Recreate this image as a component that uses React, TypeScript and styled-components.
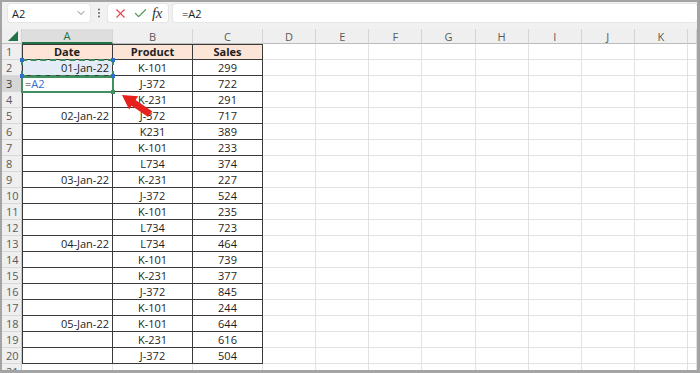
import React from 'react'
import styled, { createGlobalStyle, css } from 'styled-components'
import { X, Check, ChevronDown } from 'lucide-react'

const GlobalStyle = createGlobalStyle`
  html, body {
    margin: 0;
    padding: 0;
    background: #ffffff;
  }
  * {
    box-sizing: border-box;
  }
`

const GREEN = '#217346'
const TABLE_LINE = '#3a3a3a'
const GRID_LINE = '#e2e2e2'

const ROWS: [string, string, string][] = [
  ['Date', 'Product', 'Sales'],
  ['01-Jan-22', 'K-101', '299'],
  ['=A2', 'J-372', '722'],
  ['', 'K-231', '291'],
  ['02-Jan-22', 'J-372', '717'],
  ['', 'K231', '389'],
  ['', 'K-101', '233'],
  ['', 'L734', '374'],
  ['03-Jan-22', 'K-231', '227'],
  ['', 'J-372', '524'],
  ['', 'K-101', '235'],
  ['', 'L734', '723'],
  ['04-Jan-22', 'L734', '464'],
  ['', 'K-101', '739'],
  ['', 'K-231', '377'],
  ['', 'J-372', '845'],
  ['', 'K-101', '244'],
  ['05-Jan-22', 'K-101', '644'],
  ['', 'K-231', '616'],
  ['', 'J-372', '504'],
]

const COLUMNS = ['A', 'B', 'C', 'D', 'E', 'F', 'G', 'H', 'I', 'J', 'K', '']

const Frame = styled.div`
  width: 700px;
  height: 373px;
  display: flex;
  flex-direction: column;
  border-top: 2px solid #a4a4a4;
  border-left: 2px solid #a4a4a4;
  border-right: 3px solid #a4a4a4;
  border-bottom: 3px solid #a4a4a4;
  background: #f1f1f1;
  font-family: 'Open Sans', 'Noto Sans', sans-serif;
  overflow: hidden;
`

const FormulaBar = styled.div`
  height: 27px;
  flex: none;
  display: flex;
  align-items: flex-start;
  gap: 5px;
  padding: 2px 0 0 6px;
  background: #f1f1f1;
`

const Field = styled.div<{ $width?: number }>`
  height: 18px;
  ${({ $width }) => ($width ? css`width: ${$width}px;` : css`flex: 1;`)}
  display: flex;
  align-items: center;
  background: #ffffff;
  border-radius: 3px;
  box-shadow: 0 0 0 1px #e6e6e6;
  font-size: 11px;
  color: #222;
`

const NameText = styled.span`
  flex: 1;
  padding-left: 4px;
`

const Chevron = styled(ChevronDown)`
  margin-right: 3px;
  color: #555;
`

const Dots = styled.svg`
  width: 6px;
  height: 18px;
  margin: 0 1px;
`

const Buttons = styled(Field)`
  justify-content: space-around;
  padding: 0 4px 0 3px;
`

const CancelIcon = styled(X)`
  color: #e0474c;
`

const EnterIcon = styled(Check)`
  color: #4f9a56;
`

const Fx = styled.span`
  font-family: 'Liberation Serif', 'DejaVu Serif', serif;
  font-style: italic;
  font-size: 15px;
  color: #333;
  letter-spacing: -0.5px;
`

const FormulaText = styled.span`
  padding-left: 9px;
`

const Sheet = styled.div`
  position: relative;
  flex: 1;
  display: grid;
  grid-template-columns: 20px 91px 80px 70px repeat(8, 53.125px) 1fr;
  grid-template-rows: 15px;
  grid-auto-rows: 16px;
  overflow: hidden;
  background: #ffffff;
  font-size: 11px;
  color: #1e1e1e;
`

const Corner = styled.div`
  position: relative;
  background: #efefef;
  border-right: 1px solid #d4d4d4;
  border-bottom: 1px solid #bcbcbc;
`

const CornerTriangle = styled.svg`
  position: absolute;
  right: 3px;
  bottom: 2px;
`

const ColHeader = styled.div<{ $active?: boolean }>`
  display: flex;
  align-items: center;
  justify-content: center;
  background: ${({ $active }) => ($active ? '#dedede' : '#efefef')};
  color: ${({ $active }) => ($active ? GREEN : '#5a5a5a')};
  border-right: 1px solid #d4d4d4;
  border-bottom: ${({ $active }) => ($active ? `2px solid ${GREEN}` : '1px solid #bcbcbc')};
  font-size: 11px;
`

const RowHeader = styled.div<{ $active?: boolean }>`
  display: flex;
  align-items: center;
  padding-left: 4px;
  background: ${({ $active }) => ($active ? '#d6d6d6' : '#efefef')};
  color: ${({ $active }) => ($active ? '#3a3a3a' : '#5a5a5a')};
  border-right: 1px solid #c8c8c8;
  border-bottom: 1px solid #d8d8d8;
  font-size: 11px;
`

type Align = 'left' | 'center' | 'right'

const Cell = styled.div<{
  $table?: boolean
  $align?: Align
  $bold?: boolean
  $fill?: string
  $first?: boolean
  $top?: boolean
}>`
  position: relative;
  display: flex;
  align-items: center;
  padding: 0 3px;
  white-space: nowrap;
  justify-content: ${({ $align }) =>
    $align === 'right' ? 'flex-end' : $align === 'center' ? 'center' : 'flex-start'};
  font-weight: ${({ $bold }) => ($bold ? 700 : 400)};
  background: ${({ $fill }) => $fill || '#ffffff'};
  border-right: 1px solid ${({ $table }) => ($table ? TABLE_LINE : GRID_LINE)};
  border-bottom: 1px solid ${({ $table }) => ($table ? TABLE_LINE : GRID_LINE)};
  ${({ $first, $top }) => {
    const shadows: string[] = []
    if ($first) shadows.push(`inset 1px 0 0 ${TABLE_LINE}`)
    if ($top) shadows.push(`inset 0 1px 0 ${TABLE_LINE}`)
    return shadows.length ? css`box-shadow: ${shadows.join(', ')};` : ''
  }}
`

const Marquee = styled.div`
  position: absolute;
  z-index: 2;
  inset: -1px -2px -2px -1px;
  border: 2px dashed #3c8c5e;
  pointer-events: none;
`

const Handle = styled.span<{ $x: 'left' | 'right'; $y: 'top' | 'bottom'; $color: string }>`
  position: absolute;
  z-index: 3;
  width: 4px;
  height: 4px;
  background: ${({ $color }) => $color};
  ${({ $x }) => ($x === 'left' ? 'left: -2px;' : 'right: -3px;')}
  ${({ $y }) => ($y === 'top' ? 'top: -2px;' : 'bottom: -3px;')}
`

const ActiveBorder = styled.div`
  position: absolute;
  z-index: 2;
  inset: 0 -2px -2px -1px;
  border: 2px solid #3f8f5f;
  pointer-events: none;
`

const Eq = styled.span`
  color: #1e1e1e;
`

const Ref = styled.span`
  color: #2f6fcf;
`

const Arrow = styled.svg`
  position: absolute;
  z-index: 4;
  left: 116px;
  top: 63px;
  pointer-events: none;
`

const sheetCells = () => {
  const out: React.ReactNode[] = []
  out.push(
    <Corner key="corner">
      <CornerTriangle width="10" height="10" viewBox="0 0 10 10">
        <polygon points="10,0 10,10 0,10" fill="#217346" />
      </CornerTriangle>
    </Corner>
  )
  COLUMNS.forEach((c, i) =>
    out.push(
      <ColHeader key={`h${i}`} $active={c === 'A'}>
        {c}
      </ColHeader>
    )
  )
  for (let r = 1; r <= 21; r++) {
    out.push(
      <RowHeader key={`r${r}`} $active={r === 3}>
        {r}
      </RowHeader>
    )
    const data = ROWS[r - 1]
    COLUMNS.forEach((c, i) => {
      const key = `c${r}-${i}`
      if (data && i < 3) {
        const header = r === 1
        let content: React.ReactNode = data[i]
        let extra: React.ReactNode = null
        if (r === 2 && i === 0) {
          extra = (
            <>
              <Marquee />
              <Handle $x="left" $y="top" $color="#2f6fcf" />
              <Handle $x="right" $y="top" $color="#2f6fcf" />
              <Handle $x="left" $y="bottom" $color="#2f6fcf" />
              <Handle $x="right" $y="bottom" $color="#2f6fcf" />
            </>
          )
        }
        if (r === 3 && i === 0) {
          content = (
            <>
              <Eq>=</Eq>
              <Ref>A2</Ref>
            </>
          )
          extra = (
            <>
              <ActiveBorder />
              <Handle $x="right" $y="bottom" $color="#3f8f5f" />
            </>
          )
        }
        out.push(
          <Cell
            key={key}
            $table
            $first={i === 0}
            $top={header}
            $bold={header}
            $fill={header ? '#fce4d6' : r === 2 && i === 0 ? '#e3ecf7' : undefined}
            $align={header || i > 0 ? 'center' : r === 3 ? 'left' : 'right'}
          >
            {content}
            {extra}
          </Cell>
        )
      } else {
        out.push(<Cell key={key} />)
      }
    })
  }
  return out
}

const App = () => {
  return (
    <>
      <GlobalStyle />
      <Frame>
        <FormulaBar>
          <Field $width={82}>
            <NameText>A2</NameText>
            <Chevron size={12} strokeWidth={1.5} />
          </Field>
          <Dots viewBox="0 0 6 18">
            <circle cx="3" cy="5.5" r="1" fill="#666" />
            <circle cx="3" cy="9" r="1" fill="#666" />
            <circle cx="3" cy="12.5" r="1" fill="#666" />
          </Dots>
          <Buttons $width={60}>
            <CancelIcon size={15} strokeWidth={1.8} />
            <EnterIcon size={15} strokeWidth={1.9} />
            <Fx>fx</Fx>
          </Buttons>
          <Field>
            <FormulaText>=A2</FormulaText>
          </Field>
        </FormulaBar>
        <Sheet>
          {sheetCells()}
          <Arrow width="38" height="28" viewBox="0 0 38 28">
            <polygon
              points="4,3 20.1,4.3 17.6,8 34.1,19.2 30.1,25 13.6,13.8 11.1,17.5"
              fill="#e8201e"
            />
          </Arrow>
        </Sheet>
      </Frame>
    </>
  )
}

export default App
